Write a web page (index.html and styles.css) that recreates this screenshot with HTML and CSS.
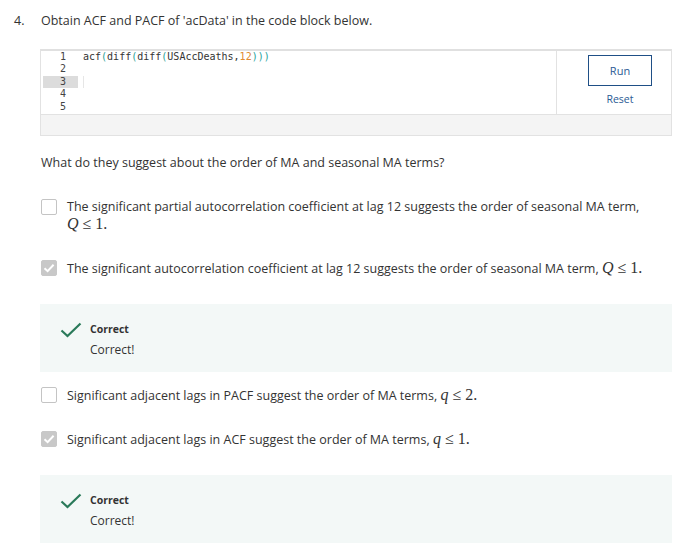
FILE: index.html
```html
<!DOCTYPE html>
<html>
<head>
<meta charset="utf-8">
<link rel="stylesheet" href="styles.css">
</head>
<body>
<div class="question">
  <div class="qhead"><span class="num">4.</span><span class="qtext">Obtain ACF and PACF of 'acData' in the code block below.</span></div>
  <div class="editor">
    <div class="editor-main">
      <div class="code">
        <div class="gutter">
          <div class="ln">1</div><div class="ln">2</div><div class="ln active">3</div><div class="ln">4</div><div class="ln">5</div>
        </div>
        <div class="lines">
          <div class="cl"><span class="kw">acf</span><span class="pn">(</span><span class="kw">diff</span><span class="pn">(</span><span class="kw">diff</span><span class="pn">(</span><span class="kw">USAccDeaths</span><span class="kw">,</span><span class="nm">12</span><span class="pn">)))</span></div>
          <div class="cl"></div>
          <div class="cl"><span class="cursor"></span></div>
          <div class="cl"></div>
          <div class="cl"></div>
        </div>
      </div>
      <div class="actions">
        <button class="run">Run</button>
        <a class="reset">Reset</a>
      </div>
    </div>
    <div class="editor-foot"></div>
  </div>
  <p class="prompt">What do they suggest about the order of MA and seasonal MA terms?</p>

  <div class="opt">
    <span class="box"></span>
    <span class="otext">The significant partial autocorrelation coefficient at lag 12 suggests the order of seasonal MA term, <span class="math"><i>Q</i> ≤ 1.</span></span>
  </div>
  <div class="opt">
    <span class="box checked"><svg viewBox="0 0 16 16" width="16" height="16"><path d="M3.5 8.3 L6.6 11.2 L12.6 4.8" fill="none" stroke="#fff" stroke-width="2"/></svg></span>
    <span class="otext">The significant autocorrelation coefficient at lag 12 suggests the order of seasonal MA term, <span class="math"><i>Q</i> ≤ 1.</span></span>
  </div>
  <div class="feedback">
    <svg class="tick" viewBox="0 0 22 16" width="22" height="16"><path d="M1.5 8.5 L7.5 14 L20.5 1.5" fill="none" stroke="#2a7a5a" stroke-width="2.2"/></svg>
    <div>
      <div class="fb-title">Correct</div>
      <div class="fb-text">Correct!</div>
    </div>
  </div>
  <div class="opt after-fb">
    <span class="box"></span>
    <span class="otext">Significant adjacent lags in PACF suggest the order of MA terms, <span class="math"><i>q</i> ≤ 2.</span></span>
  </div>
  <div class="opt">
    <span class="box checked"><svg viewBox="0 0 16 16" width="16" height="16"><path d="M3.5 8.3 L6.6 11.2 L12.6 4.8" fill="none" stroke="#fff" stroke-width="2"/></svg></span>
    <span class="otext">Significant adjacent lags in ACF suggest the order of MA terms, <span class="math"><i>q</i> ≤ 1.</span></span>
  </div>
  <div class="feedback">
    <svg class="tick" viewBox="0 0 22 16" width="22" height="16"><path d="M1.5 8.5 L7.5 14 L20.5 1.5" fill="none" stroke="#2a7a5a" stroke-width="2.2"/></svg>
    <div>
      <div class="fb-title">Correct</div>
      <div class="fb-text">Correct!</div>
    </div>
  </div>
</div>
</body>
</html>
```
FILE: styles.css
```css
* { box-sizing: border-box; }
body {
  margin: 0;
  background: #fff;
  font-family: "Open Sans", "Noto Sans", sans-serif;
  color: #333;
  font-size: 12px;
}
.question {
  padding: 12px 25px 0 14px;
}
.qhead {
  display: flex;
  font-size: 12.5px;
  line-height: 18px;
  color: #333;
}
.num { width: 27px; }
.editor {
  margin: 19px 0 0 26px;
  border: 1px solid #e2e2e2;
  border-top: 2px solid #e0e0e0;
  width: 632px;
}
.editor-main {
  display: flex;
  height: 63px;
}
.code {
  flex: 1;
  display: flex;
  border-right: 1px solid #e2e2e2;
  font-family: "DejaVu Sans Mono", monospace;
  font-size: 10px;
  line-height: 12.4px;
  padding-top: 0;
}
.gutter {
  width: 37px;
  padding-left: 2px;
}
.ln {
  height: 12.4px;
  line-height: 12.4px;
  text-align: right;
  padding-right: 12px;
  color: #444;
}
.ln.active { background: #dcdcdc; }
.lines { padding-left: 5px; flex: 1; }
.cl { height: 12.4px; white-space: pre; color: #333; }
.kw { color: #333; }
.pn { color: #2aa198; }
.nm { color: #e08a30; }
.cursor {
  display: inline-block;
  width: 1px;
  height: 12px;
  background: #e6e6e6;
  vertical-align: top;
}
.actions {
  width: 114px;
  display: flex;
  flex-direction: column;
  align-items: center;
  padding: 4px 0 0 12px;
}
.run {
  width: 64px;
  height: 31px;
  border: 1px solid #1f4f86;
  background: #fff;
  color: #2a5a94;
  font-family: "Open Sans", sans-serif;
  font-size: 11px;
}
.reset {
  margin-top: 6px;
  color: #2a5a94;
  font-size: 10.5px;
}
.editor-foot {
  height: 21px;
  background: #f4f4f4;
  border-top: 1px solid #e2e2e2;
}
.prompt {
  margin: 18px 0 0 27px;
  font-size: 12.5px;
  line-height: 18px;
}
.opt {
  display: flex;
  align-items: flex-start;
  margin: 26px 0 0 27px;
  font-size: 12.5px;
  line-height: 17px;
}
.opt.after-fb { margin-top: 14px; }
.box {
  flex: none;
  width: 16px;
  height: 16px;
  border: 1px solid #c4c4c4;
  border-radius: 2px;
  background: #fff;
  margin-right: 10px;
  margin-top: 1px;
}
.box.checked {
  background: #c8c8c8;
  border-color: #c8c8c8;
}
.box svg { display: block; margin: -1px; }
.otext { color: #333; width: 585px; }
.math {
  font-family: "Liberation Serif", "DejaVu Serif", serif;
  font-size: 16px;
  white-space: nowrap;
}
.feedback {
  display: flex;
  align-items: flex-start;
  margin: 27px 0 0 26px;
  width: 632px;
  height: 68px;
  background: #f3f8f7;
  padding: 17px 0 0 20px;
}
.tick { margin-top: 1px; margin-right: 8px; }
.fb-title {
  font-size: 10.5px;
  font-weight: 700;
  line-height: 16px;
}
.fb-text {
  font-size: 12px;
  line-height: 18px;
  margin-top: 4px;
}
```
